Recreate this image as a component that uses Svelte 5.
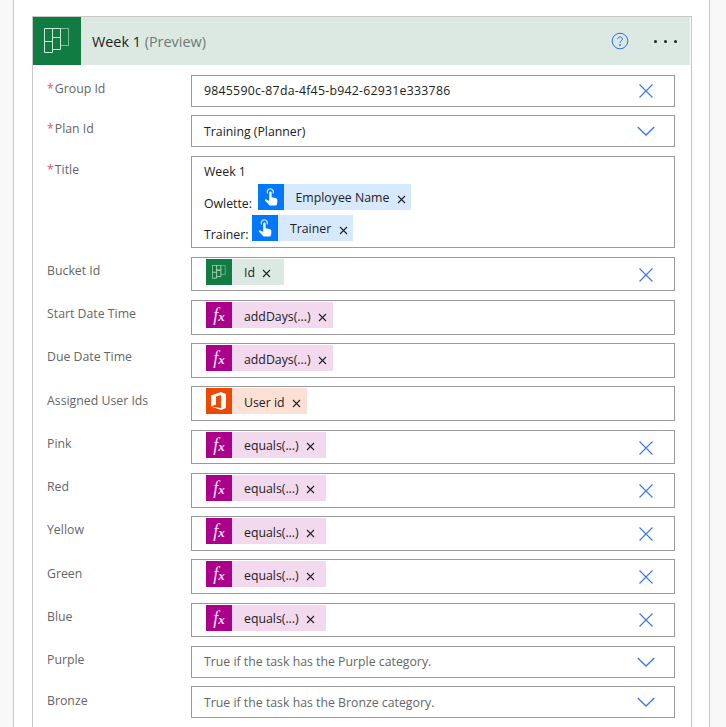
<script>
	const fx = { kind: 'fx', bg: '#f2d9ed', icon: '#aa008c' };
	const rows = [
		{ label: 'Group Id', required: true, text: '9845590c-87da-4f45-b942-62931e333786', wide: true, action: 'clear' },
		{ label: 'Plan Id', required: true, text: 'Training (Planner)', action: 'open' },
		{ label: 'Title', required: true, title: true },
		{ label: 'Bucket Id', token: { kind: 'planner', bg: '#dbe9e2', icon: '#107c41', name: 'Id', minWidth: 78 }, action: 'clear' },
		{ label: 'Start Date Time', token: { ...fx, name: 'addDays(...)' } },
		{ label: 'Due Date Time', token: { ...fx, name: 'addDays(...)' } },
		{ label: 'Assigned User Ids', token: { kind: 'office', bg: '#fde0d5', icon: '#eb4a02', name: 'User id' } },
		{ label: 'Pink', token: { ...fx, name: 'equals(...)', minWidth: 120 }, action: 'clear' },
		{ label: 'Red', token: { ...fx, name: 'equals(...)', minWidth: 120 }, action: 'clear' },
		{ label: 'Yellow', token: { ...fx, name: 'equals(...)', minWidth: 120 }, action: 'clear' },
		{ label: 'Green', token: { ...fx, name: 'equals(...)', minWidth: 120 }, action: 'clear' },
		{ label: 'Blue', token: { ...fx, name: 'equals(...)', minWidth: 120 }, action: 'clear' },
		{ label: 'Purple', hint: 'True if the task has the Purple category.', action: 'open' },
		{ label: 'Bronze', hint: 'True if the task has the Bronze category.', action: 'open' }
	];
	const touch = { kind: 'touch', bg: '#d7e9fe', icon: '#0078fb' };
</script>

{#snippet plannerIcon(size)}
	<svg width={size} height={size} viewBox="0 0 26 26" fill="none" stroke="currentColor" stroke-width={size < 20 ? 1.6 : 1}>
		<path d="M16.500 .5h8v17h-8" opacity="0.6" />
		<path d="M.5 .5h16v9h-8v15h-8z M8.500 .5v9 M.5 13.500h8 M8.500 9.500h8v12h-8" />
	</svg>
{/snippet}

{#snippet tokenIcon(t)}
	<span class="token-icon" style="background:{t.icon}">
		{#if t.kind === 'fx'}
			<span class="fx">f<small>x</small></span>
		{:else if t.kind === 'planner'}
			<span class="mini-planner">{@render plannerIcon(14)}</span>
		{:else if t.kind === 'touch'}
			<svg width="26" height="26" viewBox="0 0 26 26" fill="#fff">
				<path fill="none" stroke="#fff" stroke-width="1.200" opacity="0.85" d="M9.600 9.500a3.100 3.100 0 1 1 5.400 0" />
				<path d="M11.200 8.600a1.200 1.200 0 0 1 2.400 0v4.700l3.700.7c1.200.2 2 .9 2 2v2.600c0 1-.4 2-1.100 2.900h-6.600l-4.500-4.700c-.7-.9.300-2 1.300-1.400l2.800 1.600z" />
			</svg>
		{:else}
			<svg width="26" height="26" viewBox="0 0 26 26" fill="#fff">
				<path fill-rule="evenodd" d="M5 7.500 15 4l5 2v14l-5 2-10-3.500zM15 7l-5 1.500v8L5 18.500 15 20z" />
			</svg>
		{/if}
	</span>
{/snippet}

{#snippet token(t)}
	<span class="token" style="background:{t.bg}; min-width:{t.minWidth ? t.minWidth + 'px' : 'auto'}">
		{@render tokenIcon(t)}
		<span class="token-name">{t.name}</span>
		<svg class="token-x" width="9" height="9" viewBox="0 0 9 9" stroke="#222" stroke-width="1.100"><path d="M1 1l7 7M8 1l-7 7" /></svg>
	</span>
{/snippet}

<div class="page">
	<div class="canvas">
		<div class="card">
			<header class="head">
				<span class="head-icon">{@render plannerIcon(26)}</span>
				<span class="head-title">Week 1 <em>(Preview)</em></span>
				<svg class="help" width="18" height="18" viewBox="0 0 18 18" fill="none" stroke="#2f6ff0">
					<circle cx="9" cy="9" r="7.800" />
					<path d="M6.700 7.200c0-3 4.700-3 4.700-.1 0 1.900-2.400 1.800-2.400 3.800" />
					<circle cx="9" cy="13" r="0.5" fill="#2f6ff0" />
				</svg>
				<span class="dots"><i></i><i></i><i></i></span>
			</header>

			<div class="fields">
				{#each rows as row}
					<div class="row">
						<div class="label">
							{#if row.required}<span class="star">*</span>{/if}{row.label}
						</div>
						{#if row.title}
							<div class="box title-box">
								<div class="title-line">Week 1</div>
								<div class="title-line">Owlette: {@render token({ ...touch, name: 'Employee Name' })}</div>
								<div class="title-line tight">Trainer: {@render token({ ...touch, name: 'Trainer' })}</div>
							</div>
						{:else}
							<div class="box" class:tokened={row.token}>
								{#if row.token}
									{@render token(row.token)}
								{:else if row.hint}
									<span class="hint">{row.hint}</span>
								{:else}
									<span class:wide={row.wide}>{row.text}</span>
								{/if}
								{#if row.action === 'clear'}
									<svg class="action clear" width="14" height="14" viewBox="0 0 14 14" stroke="#3a74f2" stroke-width="1.100"><path d="M.5 .5l13 13M13.500 .5l-13 13" /></svg>
								{:else if row.action === 'open'}
									<svg class="action open" width="18" height="10" viewBox="0 0 18 10" fill="none" stroke="#3a74f2" stroke-width="1.300"><path d="M.7 1l8.300 8 8.300-8" /></svg>
								{/if}
							</div>
						{/if}
					</div>
				{/each}
			</div>
		</div>
	</div>
</div>

<style>
	:global(body) {
		margin: 0;
		background: #f8f8f8;
	}

	.page {
		width: 726px;
		height: 727px;
		overflow: hidden;
		font-family: "Open Sans", "Noto Sans", sans-serif;
		color: #222;
	}

	.canvas {
		width: 697px;
		height: 727px;
		box-sizing: border-box;
		margin-left: 13px;
		padding: 16px 17px 0 18px;
		background: #fff;
		border-left: 1px solid #c8c8c8;
		border-right: 1px solid #c8c8c8;
	}

	.card {
		width: 660px;
		box-sizing: border-box;
		border: 1px solid #c8c8c8;
		border-bottom: 0;
		padding-bottom: 40px;
	}

	.head {
		display: flex;
		align-items: center;
		height: 48px;
		margin-right: 1px;
		background: #dbe9e2;
	}

	.head-icon {
		display: flex;
		align-items: center;
		justify-content: center;
		width: 48px;
		height: 48px;
		background: #107c41;
		color: #cfe5d8;
		flex-shrink: 0;
	}

	.head-title {
		margin-left: 11px;
		font-size: 14.400px;
		color: #222;
	}

	.head-title em {
		font-style: normal;
		color: #6f7a75;
	}

	.help {
		margin-left: auto;
		margin-right: 25px;
	}

	.dots {
		display: flex;
		gap: 7px;
		margin-right: 13px;
	}

	.dots i {
		width: 3px;
		height: 3px;
		border-radius: 50%;
		background: #222;
	}

	.fields {
		display: flex;
		flex-direction: column;
		gap: 8.600px;
		padding: 9.800px 16px 0 14px;
	}

	.row {
		display: flex;
	}

	.label {
		width: 144px;
		flex-shrink: 0;
		padding-top: 6.100px;
		font-size: 12.300px;
		line-height: 16px;
		color: #666;
	}

	.star {
		margin-right: 1px;
		color: #e8506a;
	}

	.box {
		flex: 1;
		display: flex;
		align-items: center;
		box-sizing: border-box;
		min-height: 32px;
		padding: 0 12px;
		border: 1px solid #999;
		font-size: 12.300px;
		background: #fff;
	}

	.box.tokened {
		min-height: 34.650px;
		padding-left: 14px;
		align-items: flex-start;
		padding-top: 1px;
	}

	.hint {
		color: #666;
	}

	.wide {
		letter-spacing: 0.25px;
	}

	.action {
		margin-left: auto;
		align-self: center;
	}

	.action.clear {
		margin-right: 9px;
	}

	.action.open {
		margin-right: 7px;
	}

	.title-box {
		display: flex;
		flex-direction: column;
		align-items: flex-start;
		gap: 5px;
		height: 92px;
		margin-bottom: 0.2px;
		padding-top: 8.600px;
	}

	.title-line {
		display: flex;
		align-items: flex-end;
		gap: 5.500px;
		line-height: 12px;
	}

	.title-line:first-child {
		margin-bottom: 1.600px;
	}

	.title-line.tight {
		gap: 3.500px;
	}

	.token {
		display: inline-flex;
		align-items: center;
		box-sizing: border-box;
		height: 26px;
		padding-right: 5.500px;
	}

	.token-icon {
		display: flex;
		align-items: center;
		justify-content: center;
		width: 26px;
		height: 26px;
		flex-shrink: 0;
	}

	.token-name {
		margin-left: 12px;
		margin-top: 2px;
		font-size: 12.300px;
	}

	.token-x {
		margin-left: 7.500px;
		margin-top: 4px;
	}

	.fx {
		font-family: "Liberation Serif", serif;
		font-style: italic;
		font-size: 18px;
		line-height: 1;
		color: #f7e6f3;
	}

	.fx small {
		font-size: 13px;
		font-weight: 700;
	}

	.mini-planner {
		display: flex;
		color: #b5d6c3;
	}
</style>
